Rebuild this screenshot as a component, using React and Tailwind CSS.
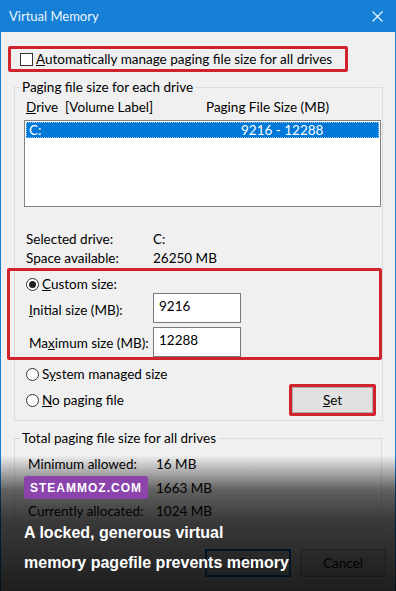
export default function App() {
  const red = "border-[#d0232e]";
  return (
    <div className="relative w-[396px] h-[591px] overflow-hidden bg-[#f0f0f0] [font-family:Lato,sans-serif] text-[13.5px] leading-[20px] text-black">
      <div className="h-[32px] bg-[#1580d6] flex items-center justify-between pl-[9px] pr-[13px]">
        <span className="text-[13px] text-[#eef6fd]">Virtual Memory</span>
        <svg width="11" height="11" viewBox="0 0 11 11" className="block">
          <path d="M0.5 0.5 L10.5 10.5 M10.5 0.5 L0.5 10.5" stroke="#eef6fd" strokeWidth="1.2" fill="none" />
        </svg>
      </div>
      <div className="h-[559px] border-x border-[#1580d6] flex flex-col">
        {/* auto manage */}
        <div className={`mt-[14px] ml-[7px] w-[340px] h-[26px] border-[3px] ${red} rounded-[2px] flex items-center pl-[9px]`}>
          <span className="w-[13px] h-[13px] border border-[#333] bg-white shrink-0" />
          <span className="ml-[3px] whitespace-nowrap"><u>A</u>utomatically manage paging file size for all drives</span>
        </div>

        {/* group 1 */}
        <fieldset className="mt-[5px] ml-[13px] w-[368px] h-[344px] border border-[#dcdcdc] flex flex-col">
          <legend className="ml-[5px] px-[2px] leading-[20px]">Paging file size for each drive</legend>
          <div className="h-[20px] flex pl-[11px]">
            <span className="w-[180px]"><u>D</u>rive&nbsp;&nbsp;[Volume Label]</span>
            <span>Paging File Size (MB)</span>
          </div>
          <div className="mt-[3px] ml-[9px] w-[357px] h-[87px] border border-[#828282] bg-white p-[1px]">
            <div className="h-[16px] bg-[#0078d7] text-white flex items-center pl-[2px] border border-dotted border-[#9cc6ee] leading-[16px]">
              <span className="w-[212px]">C:</span>
              <span>9216 - 12288</span>
            </div>
          </div>
          <div className="mt-[23px] pl-[11px] leading-[19px]">
            <div className="flex"><span className="w-[127px]">Selected drive:</span><span>C:</span></div>
            <div className="flex"><span className="w-[127px]">Space available:</span><span>26250 MB</span></div>
          </div>
          {/* custom size box */}
          <div className={`-ml-[8px] w-[375px] h-[92px] border-[3px] ${red} rounded-[2px] flex flex-col`}>
            <div className="mt-[4px] h-[18px] flex items-center pl-[16px]">
              <span className="w-[13px] h-[13px] rounded-full border border-[#333] bg-white flex items-center justify-center">
                <span className="w-[7px] h-[7px] rounded-full bg-[#222]" />
              </span>
              <span className="ml-[3px]"><u>C</u>ustom size:</span>
            </div>
            <div className="h-[30px] flex items-start pl-[19px]">
              <span className="w-[124px] mt-[7px] whitespace-nowrap"><u>I</u>nitial size (MB):</span>
              <div className="w-[88px] h-[30px] border border-[#7a7a7a] bg-white pl-[5px] pt-[2px]">9216</div>
            </div>
            <div className="mt-[4px] h-[30px] flex items-start pl-[19px]">
              <span className="w-[124px] mt-[6px] whitespace-nowrap">Ma<u>x</u>imum size (MB):</span>
              <div className="w-[88px] h-[30px] border border-[#7a7a7a] bg-white pl-[5px] pt-[2px]">12288</div>
            </div>
          </div>
          <div className="mt-[4px] h-[20px] flex items-center pl-[11px]">
            <span className="w-[13px] h-[13px] rounded-full border border-[#333] bg-white" />
            <span className="ml-[3px]">S<u>y</u>stem managed size</span>
          </div>
          <div className="h-[32px] flex items-center justify-between pl-[11px] pr-[6px]">
            <div className="flex items-center">
              <span className="w-[13px] h-[13px] rounded-full border border-[#333] bg-white" />
              <span className="ml-[3px]"><u>N</u>o paging file</span>
            </div>
            <div className={`w-[87px] h-[32px] border-[3px] ${red} rounded-[2px]`}>
              <div className="w-full h-full bg-[#e1e1e1] border border-[#adadad] flex items-center justify-center">
                <span><u>S</u>et</span>
              </div>
            </div>
          </div>
        </fieldset>

        {/* group 2 */}
        <fieldset className="mt-[7px] ml-[13px] w-[368px] h-[103px] border border-[#dcdcdc] flex flex-col">
          <legend className="ml-[5px] px-[2px] leading-[20px]">Total paging file size for all drives</legend>
          <div className="mt-[6px] h-[20px] flex pl-[13px]">
            <span className="w-[128px] whitespace-nowrap">Minimum allowed:</span><span>16 MB</span>
          </div>
          <div className="mt-[2px] h-[23px] flex items-center pl-[13px]">
            <div className="w-[128px]">
              <div className="relative z-10 -ml-[4px] w-[124px] h-[23px] rounded-[3px] bg-[#8c44ad] flex items-center justify-center">
                <span className="[font-family:'Liberation_Sans',Arial,sans-serif] font-bold text-[12px] tracking-[1px] text-white">STEAMMOZ.COM</span>
              </div>
            </div>
            <span>1663 MB</span>
          </div>
          <div className="mt-[2px] h-[20px] flex pl-[13px]">
            <span className="w-[128px] whitespace-nowrap">Currently allocated:</span><span>1024 MB</span>
          </div>
        </fieldset>

        <div className="mt-[18px] flex justify-end gap-[9px] pr-[9px]">
          <div className="w-[86px] h-[28px] bg-[#e1e1e1] border-2 border-[#0078d7] flex items-center justify-center">OK</div>
          <div className="w-[86px] h-[28px] bg-[#e1e1e1] border border-[#adadad] flex items-center justify-center">Cancel</div>
        </div>
      </div>

      {/* overlay */}
      <div className="absolute inset-x-0 bottom-0 h-[136px] bg-[linear-gradient(to_bottom,rgba(0,0,0,0)_0%,rgba(0,0,0,0.6)_26%,rgba(0,0,0,0.76)_48%,rgba(0,0,0,0.88)_100%)] pt-[63px] pl-[24px]">
        <div className="[font-family:'Liberation_Sans',Arial,sans-serif] font-bold text-[16px] leading-[30px] text-white">
          <div>A locked, generous virtual</div>
          <div>memory pagefile prevents memory</div>
        </div>
      </div>
    </div>
  );
}
